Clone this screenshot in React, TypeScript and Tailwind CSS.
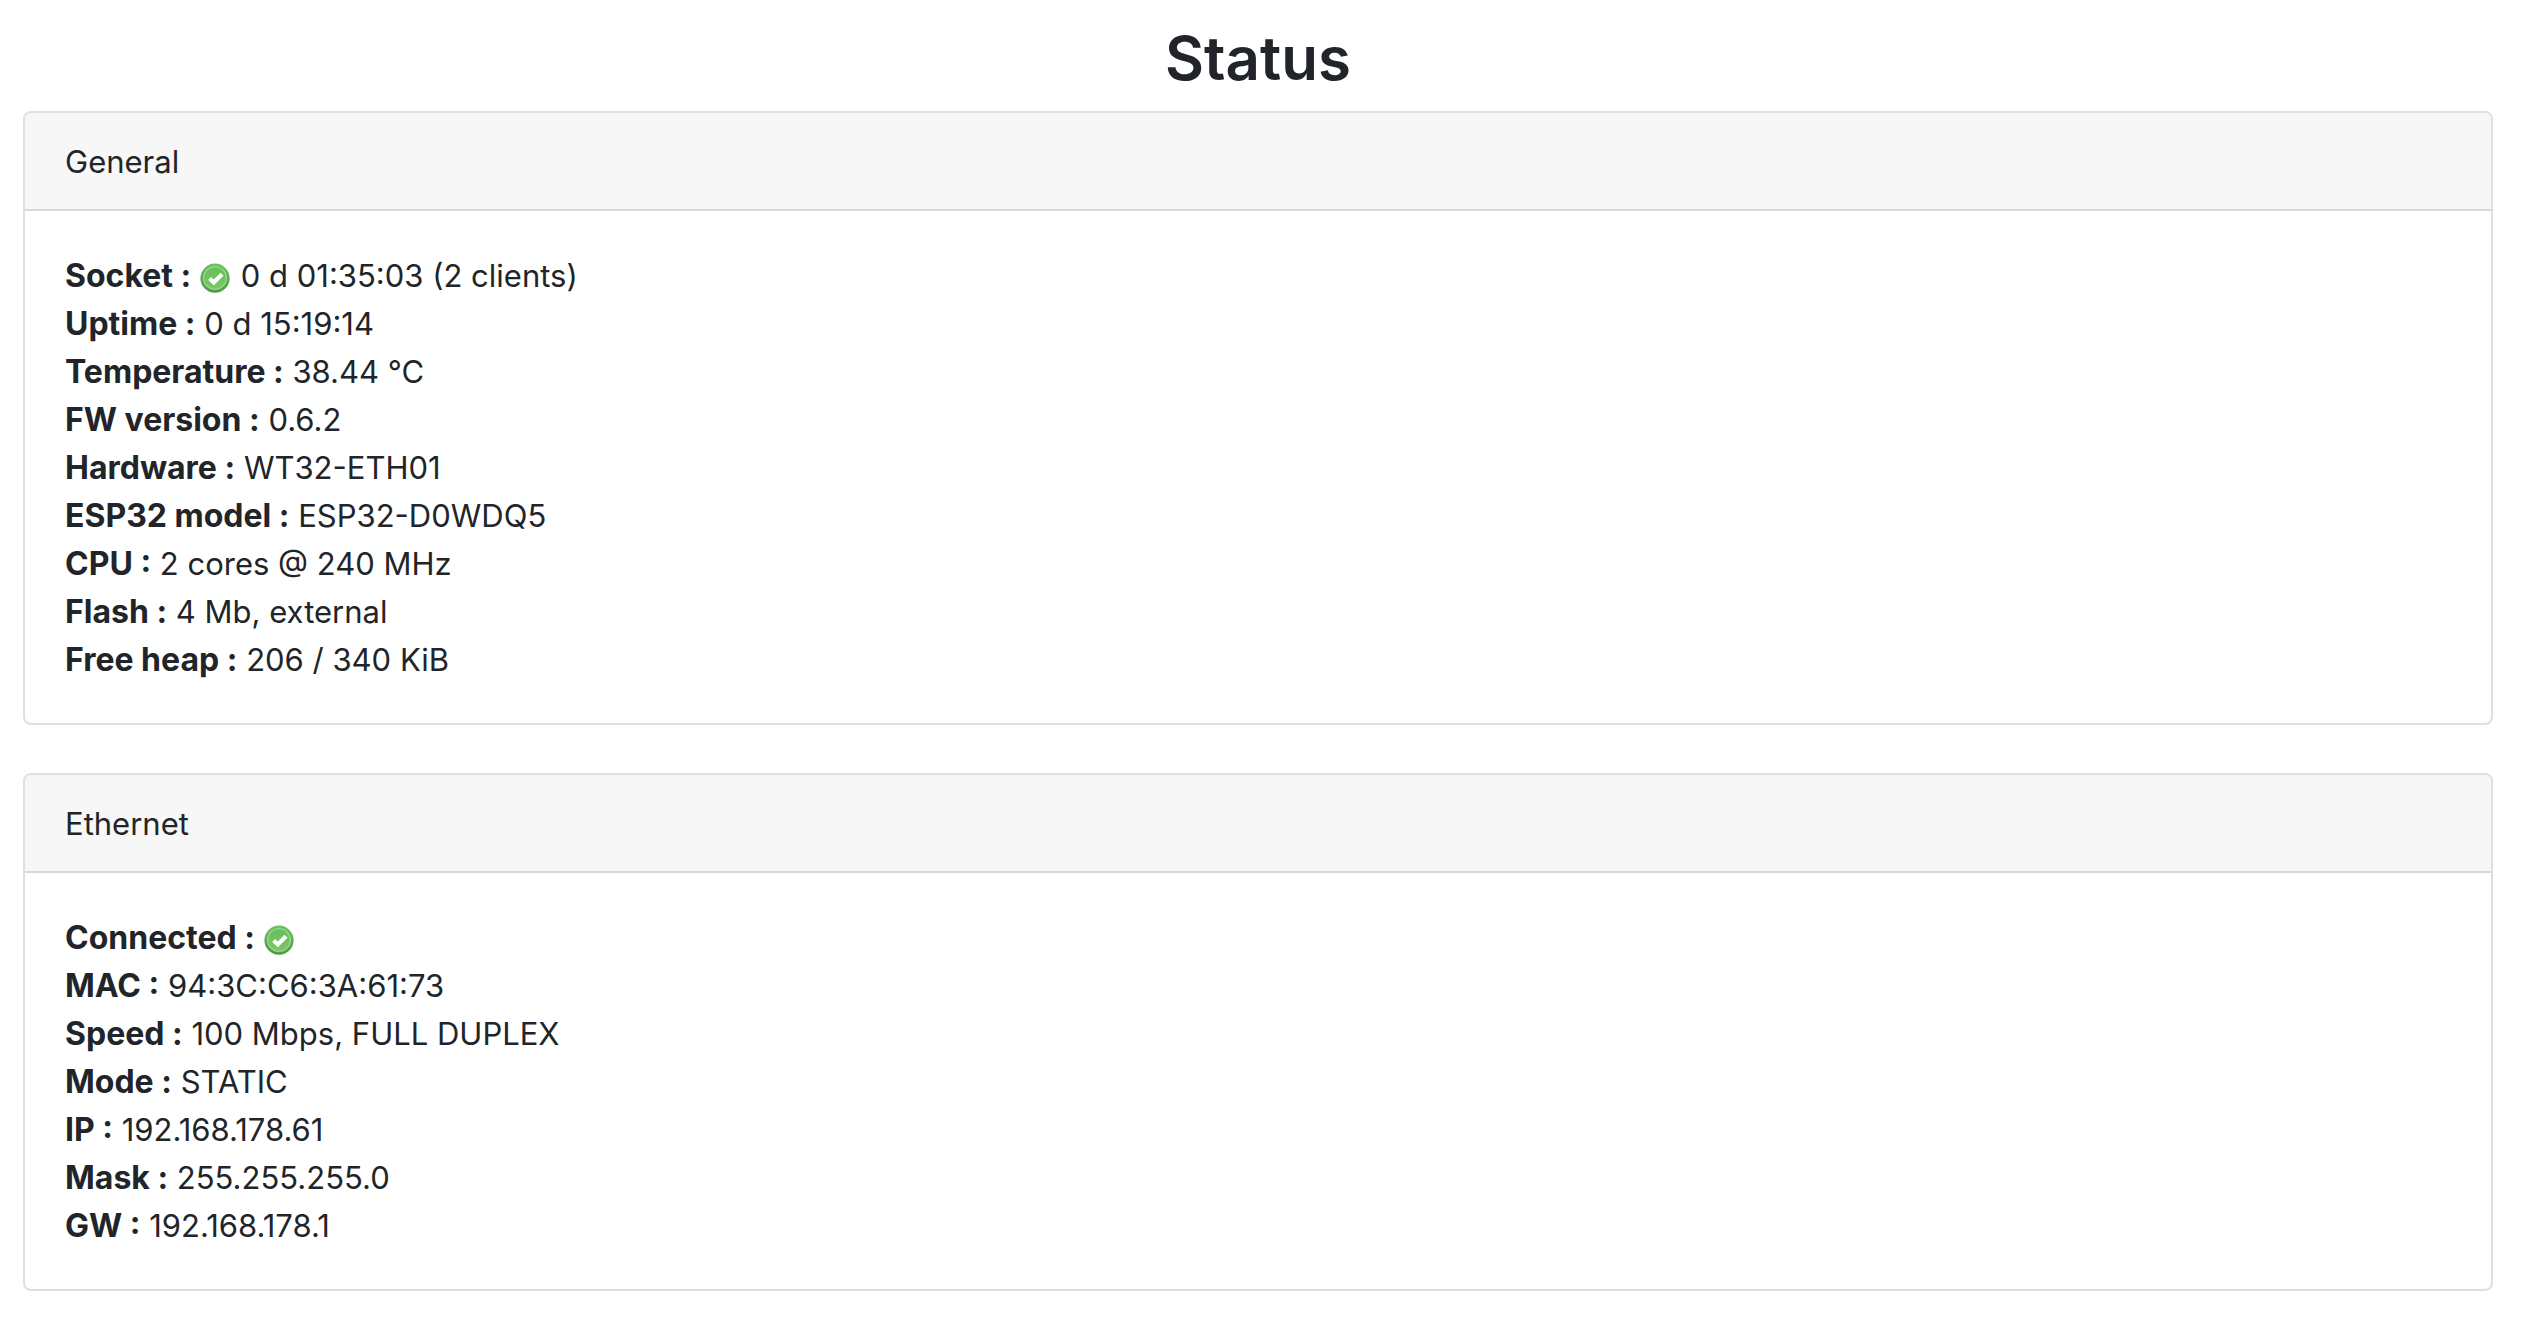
import type { ReactNode } from "react";

interface Row {
  label: string;
  value?: string;
  ok?: boolean;
}

const general: Row[] = [
  { label: "Socket", value: "0 d 01:35:03 (2 clients)", ok: true },
  { label: "Uptime", value: "0 d 15:19:14" },
  { label: "Temperature", value: "38.44 °C" },
  { label: "FW version", value: "0.6.2" },
  { label: "Hardware", value: "WT32-ETH01" },
  { label: "ESP32 model", value: "ESP32-D0WDQ5" },
  { label: "CPU", value: "2 cores @ 240 MHz" },
  { label: "Flash", value: "4 Mb, external" },
  { label: "Free heap", value: "206 / 340 KiB" },
];

const ethernet: Row[] = [
  { label: "Connected", ok: true },
  { label: "MAC", value: "94:3C:C6:3A:61:73" },
  { label: "Speed", value: "100 Mbps, FULL DUPLEX" },
  { label: "Mode", value: "STATIC" },
  { label: "IP", value: "192.168.178.61" },
  { label: "Mask", value: "255.255.255.0" },
  { label: "GW", value: "192.168.178.1" },
];

function OkIcon() {
  return (
    <svg viewBox="0 0 32 32" className="inline-block size-8 align-middle" role="img" aria-label="OK">
      <defs>
        <linearGradient id="ok-rim" x1="0" y1="0" x2="0" y2="1">
          <stop offset="0" stopColor="#6cc35f" />
          <stop offset="1" stopColor="#4a9a42" />
        </linearGradient>
        <linearGradient id="ok-face" x1="0" y1="0" x2="0" y2="1">
          <stop offset="0" stopColor="#66bf5a" />
          <stop offset="1" stopColor="#7cc667" />
        </linearGradient>
      </defs>
      <circle cx="15" cy="15.2" r="14.6" fill="url(#ok-rim)" />
      <circle cx="15" cy="15" r="11.4" fill="url(#ok-face)" stroke="#98d58d" strokeWidth="1.4" />
      <path d="M9.6 15.4l4.2 4 8.2-8.2" fill="none" stroke="#fff" strokeWidth="4.2" />
    </svg>
  );
}

function Card({ title, children }: { title: string; children: ReactNode }) {
  return (
    <section className="rounded-lg border-2 border-[#dfdfdf] bg-white">
      <h2 className="rounded-t-md border-b-2 border-[#d8d8d8] bg-[#f7f7f7] px-10 pt-[25px] pb-[23px]">{title}</h2>
      <div className="px-10 pt-[41px] pb-[39px]">{children}</div>
    </section>
  );
}

function Rows({ rows }: { rows: Row[] }) {
  return (
    <ul>
      {rows.map((row) => (
        <li key={row.label} className="h-12">
          <strong className="text-[32px] font-bold">{row.label} :</strong> {row.ok && <OkIcon />} {row.value}
        </li>
      ))}
    </ul>
  );
}

export default function App() {
  return (
    <main className="pt-[22px] pr-[43px] pl-[23px] font-['Inter',sans-serif] text-[31px] leading-[48px] text-[#212529]">
      <h1 className="mb-[17px] text-center text-[60px] leading-[72px] font-semibold">Status</h1>
      <div className="flex flex-col gap-12">
        <Card title="General">
          <Rows rows={general} />
        </Card>
        <Card title="Ethernet">
          <Rows rows={ethernet} />
        </Card>
      </div>
    </main>
  );
}
